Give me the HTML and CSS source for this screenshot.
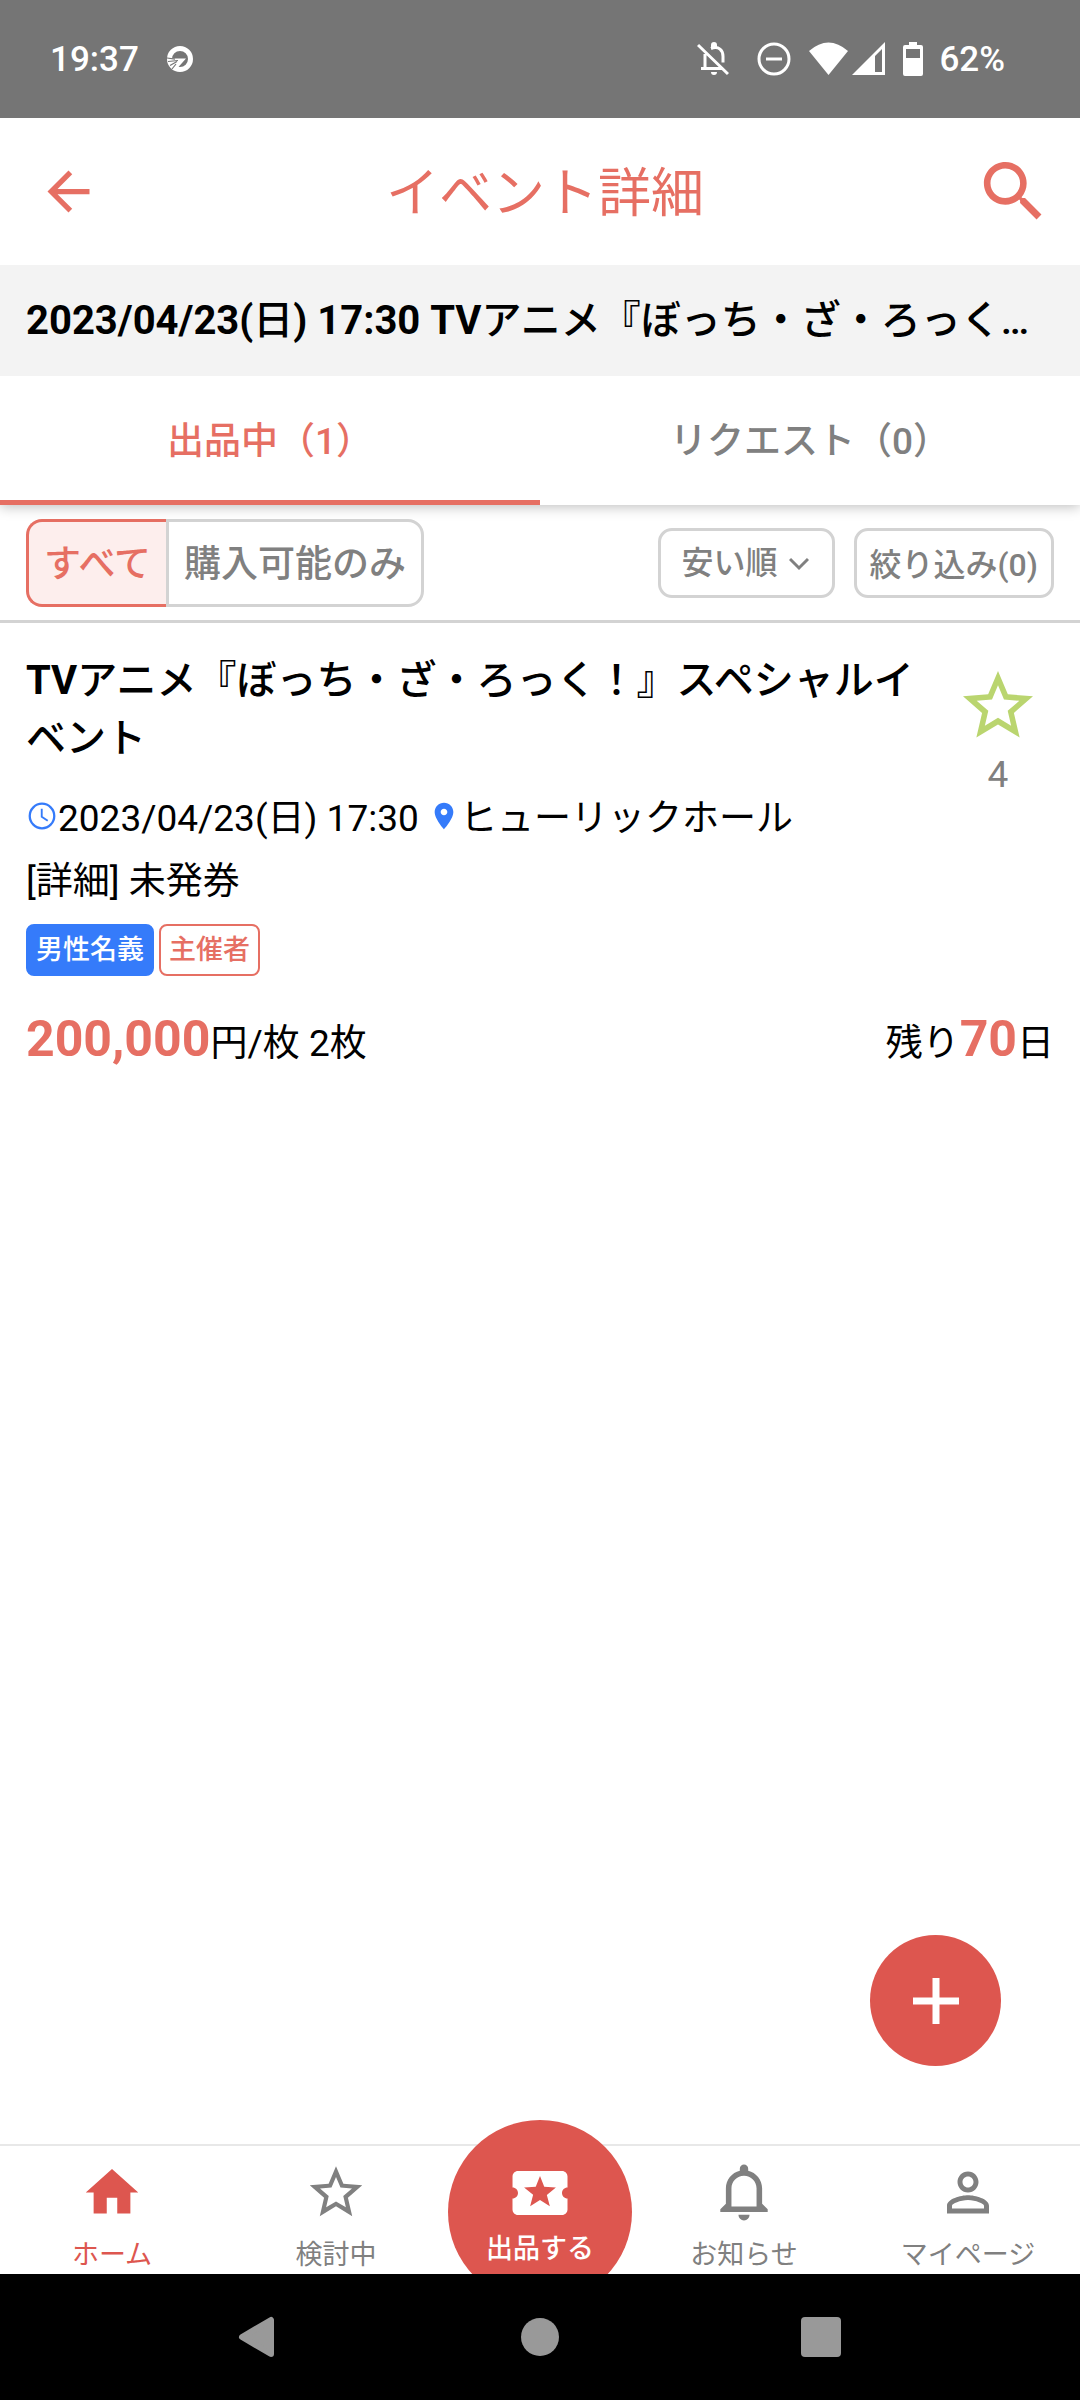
FILE: index.html
```html
<!DOCTYPE html>
<html lang="ja">
<head>
<meta charset="utf-8">
<meta name="viewport" content="width=device-width, initial-scale=1">
<title>イベント詳細</title>
<link rel="stylesheet" href="styles.css">
</head>
<body>
<div class="statusbar">
  <div class="status-left">
    <span>19:37</span>
    <svg width="26" height="26" viewBox="0 0 26 26" aria-hidden="true"><circle cx="13" cy="13" r="10.500" fill="none" stroke="#fff" stroke-width="5"/><path fill="#fff" d="M0 12.500H19L11 21.500 9 24 3 20 1 14z"/><path d="M0 12L8 13.200M1 15.500L11 14.500M3 19.500L10 15.500M5 23L9 18" stroke="#757575" stroke-width="1.200"/></svg>
  </div>
  <div class="status-right">
    <svg class="bell-off" width="32" height="34" viewBox="0 0 32 34" fill="none" stroke="#fff" stroke-width="3" aria-hidden="true"><path d="M1 3l30 29M8 12v14M4 26.500h22M14 6.500c8-3 12 2 12 8v6"/><path d="M14 3a3 3 0 0 1 6 0v3h-6zM14 30h6a3 3 0 0 1-6 0z" fill="#fff" stroke="none"/></svg>
    <svg class="dnd" width="34" height="34" viewBox="0 0 34 34" fill="none" stroke="#fff" stroke-width="3" aria-hidden="true"><circle cx="17" cy="17" r="15"/><path d="M9 17h16"/></svg>
    <svg width="39" height="34" viewBox="0 0 39 34" fill="#fff" aria-hidden="true"><path d="M0 9Q19.500-8 39 9L19.500 33z"/></svg>
    <svg class="signal" width="33" height="34" viewBox="0 0 33 34" fill="#fff" aria-hidden="true"><path fill-rule="evenodd" d="M0 33L33 0V33ZM23 14V30H30V7Z"/></svg>
    <svg class="battery" width="20" height="34" viewBox="0 0 20 34" aria-hidden="true"><path fill="#fff" fill-rule="evenodd" d="M6 0h8v3h4q2 0 2 2v27q0 2-2 2H2q-2 0-2-2V5q0-2 2-2h4zM3 7v9h14V7z"/></svg>
    <span>62%</span>
  </div>
</div>

<header class="appbar">
  <button class="icon-button" type="button" aria-label="戻る">
    <svg width="63" height="63" viewBox="0 0 24 24" fill="currentColor"><path d="M20 11H7.830l5.590-5.590L12 4l-8 8 8 8 1.410-1.410L7.830 13H20v-2z"/></svg>
  </button>
  <h1>イベント詳細</h1>
  <button class="icon-button" type="button" aria-label="検索">
    <svg width="79" height="79" viewBox="0 0 24 24" fill="currentColor"><path d="M15.500 14h-.790l-.280-.270C15.410 12.590 16 11.110 16 9.500 16 5.910 13.090 3 9.500 3S3 5.910 3 9.500 5.910 16 9.500 16c1.610 0 3.090-.590 4.230-1.570l.270.280v.790l5 4.990L20.490 19l-4.990-5zm-6 0C7.010 14 5 11.990 5 9.500S7.010 5 9.500 5 14 7.010 14 9.500 11.990 14 9.500 14z"/></svg>
  </button>
</header>

<h2 class="event-name"><b>2023/04/23(</b>日<b>) 17:30 TV</b>アニメ『ぼっち・ざ・ろっく！』スペシャルイベント</h2>

<nav class="tabs">
  <a class="tab active" href="#selling">出品中（1）</a>
  <a class="tab" href="#requests">リクエスト（0）</a>
</nav>

<div class="filters">
  <div class="segmented">
    <button class="segment selected" type="button">すべて</button>
    <button class="segment" type="button">購入可能のみ</button>
  </div>
  <div class="sorting">
    <div class="sort">
      <select class="control" aria-label="並び順">
        <option>安い順</option>
        <option>高い順</option>
      </select>
      <svg class="chevron" width="20" height="14" viewBox="0 0 20 14" fill="none" stroke="currentColor" stroke-width="3" aria-hidden="true"><path d="M1 2l9 9 9-9"/></svg>
    </div>
    <button class="control" type="button">絞り込み(0)</button>
  </div>
</div>

<main class="listing">
  <article class="ticket">
    <div class="ticket-top">
      <div class="ticket-info">
        <h3><b>TV</b>アニメ『ぼっち・ざ・ろっく！』スペシャルイベント</h3>
        <p class="detail"><svg class="inline-icon" width="32" height="32" viewBox="0 0 24 24" fill="none" stroke="currentColor" stroke-width="1.700" aria-hidden="true"><circle cx="12" cy="12" r="9.200"/><path d="M11.800 6.500v6l4.500 3" stroke-width="1.400"/></svg>2023/04/23(日) 17:30 <svg class="inline-icon" width="32" height="32" viewBox="0 0 24 24" fill="currentColor" aria-hidden="true"><path d="M12 2C8.130 2 5 5.130 5 9c0 5.250 7 13 7 13s7-7.750 7-13c0-3.870-3.130-7-7-7zm0 9.500c-1.380 0-2.500-1.120-2.500-2.500s1.120-2.500 2.500-2.500 2.500 1.120 2.500 2.500-1.120 2.500-2.500 2.500z"/></svg>ヒューリックホール</p>
        <p class="detail">[詳細] 未発券</p>
      </div>
      <button class="favorite" type="button" aria-label="お気に入り">
        <svg width="84" height="84" viewBox="0 0 24 24" fill="#bad56f"><path d="M12 15.390L8.240 17.660 9.230 13.380 5.910 10.500 10.290 10.130 12 6.090 13.710 10.130 18.090 10.500 14.770 13.380 15.760 17.660M22 9.240L14.810 8.630 12 2 9.190 8.630 2 9.240 7.450 13.970 5.820 21 12 17.270 18.180 21 16.540 13.970 22 9.240Z"/></svg>
        <span>4</span>
      </button>
    </div>
    <div class="tags">
      <span class="tag filled">男性名義</span>
      <span class="tag">主催者</span>
    </div>
    <div class="price-row">
      <span><strong>200,000</strong>円/枚 2枚</span>
      <span>残り<strong>70</strong>日</span>
    </div>
  </article>
  <button class="fab" type="button" aria-label="追加">
    <svg width="46" height="46" viewBox="0 0 46 46" stroke="#fff" stroke-width="7"><path d="M0 23h46M23 0v46"/></svg>
  </button>
</main>

<nav class="bottom-nav">
  <a class="nav-item current" href="#home">
    <svg width="66" height="66" viewBox="0 0 24 24" fill="currentColor"><path d="M10 20V14H14V20H19V12H22L12 3 2 12H5V20H10Z"/></svg>
    <span>ホーム</span>
  </a>
  <a class="nav-item" href="#watching">
    <svg width="66" height="66" viewBox="0 0 24 24" fill="currentColor"><path d="M12 15.390L8.240 17.660 9.230 13.380 5.910 10.500 10.290 10.130 12 6.090 13.710 10.130 18.090 10.500 14.770 13.380 15.760 17.660M22 9.240L14.810 8.630 12 2 9.190 8.630 2 9.240 7.450 13.970 5.820 21 12 17.270 18.180 21 16.540 13.970 22 9.240Z"/></svg>
    <span>検討中</span>
  </a>
  <a class="nav-sell" href="#sell">
    <svg width="66" height="66" viewBox="0 0 24 24" fill="currentColor"><path d="M20 12c0-1.100.900-2 2-2V6c0-1.100-.900-2-2-2H4c-1.100 0-1.990.900-1.990 2v4c1.100 0 1.990.900 1.990 2s-.890 2-2 2v4c0 1.100.900 2 2 2h16c1.100 0 2-.900 2-2v-4c-1.100 0-2-.900-2-2zm-4.420 4.800L12 14.500l-3.580 2.300 1.080-4.120-3.290-2.690 4.240-.250L12 5.800l1.540 3.950 4.240.250-3.290 2.690 1.090 4.110z"/></svg>
    <span>出品する</span>
  </a>
  <a class="nav-item" href="#news">
    <svg width="66" height="66" viewBox="0.200 0.700 22.600 22.600" fill="currentColor"><path d="M16 17H7V10.500C7 8 9 6 11.500 6 14 6 16 8 16 10.500M18 16V10.500C18 7.430 15.860 4.860 13 4.180V3.500A1.500 1.500 0 0 0 11.500 2 1.500 1.500 0 0 0 10 3.500V4.180C7.130 4.860 5 7.430 5 10.500V16L3 18V19H20V18M11.500 22A2 2 0 0 0 13.500 20H9.500A2 2 0 0 0 11.500 22Z"/></svg>
    <span>お知らせ</span>
  </a>
  <a class="nav-item" href="#mypage">
    <svg width="66" height="66" viewBox="0 0 24 24" fill="currentColor"><path d="M12 5.900c1.160 0 2.100.940 2.100 2.100s-.940 2.100-2.100 2.100S9.900 9.160 9.900 8s.940-2.100 2.100-2.100m0 9c2.970 0 6.100 1.460 6.100 2.100v1.100H5.900V17c0-.640 3.130-2.100 6.100-2.100M12 4C9.790 4 8 5.790 8 8s1.790 4 4 4 4-1.790 4-4-1.790-4-4-4zm0 9c-2.670 0-8 1.340-8 4v3h16v-3c0-2.660-5.330-4-8-4z"/></svg>
    <span>マイページ</span>
  </a>
</nav>

<div class="system-nav">
  <button type="button" aria-label="戻る"><svg width="44" height="44" viewBox="0 0 44 44" fill="#999" stroke="#999" stroke-width="6" stroke-linejoin="round"><path d="M5 22L34 5V39Z"/></svg></button>
  <button type="button" aria-label="ホーム"><svg width="40" height="40" viewBox="0 0 40 40" fill="#999"><circle cx="20" cy="20" r="19"/></svg></button>
  <button type="button" aria-label="最近のアプリ"><svg width="40" height="40" viewBox="0 0 40 40" fill="#999"><rect width="40" height="40" rx="4"/></svg></button>
</div>
</body>
</html>
```
FILE: styles.css
```css
:root {
  --coral: #e66f63;
  --red: #dd564f;
  --gray: #808080;
  --line: #d3d3d3;
  --blue: #357bfa;
  --side: 26px;
}

* {
  box-sizing: border-box;
}

body {
  margin: 0;
  min-height: 100vh;
  display: flex;
  flex-direction: column;
  background: #fff;
  color: #000;
  font-family: Roboto, "Noto Sans CJK JP", sans-serif;
  font-size: 37px;
}

h1, h2, h3, p {
  margin: 0;
  font-weight: 400;
}

a {
  color: inherit;
  text-decoration: none;
}

button, select {
  margin: 0;
  padding: 0;
  border: 0;
  background: none;
  color: inherit;
  font: inherit;
}

svg {
  display: block;
}

/* Status bar */
.statusbar {
  display: flex;
  justify-content: space-between;
  align-items: center;
  height: 118px;
  padding: 0 75px 0 50px;
  background: #757575;
  color: #fff;
  font-size: 35px;
  font-weight: 500;
}

.status-left, .status-right {
  display: flex;
  align-items: center;
}

.status-left {
  gap: 28px;
}

.bell-off {
  margin-right: 28px;
}

.dnd {
  margin-right: 18px;
}

.signal {
  margin: 0 18px 0 4px;
}

.battery {
  margin-right: 16px;
}

/* App bar */
.appbar {
  display: flex;
  justify-content: space-between;
  align-items: center;
  height: 147px;
  padding: 0 27px 0 37px;
  color: var(--coral);
}

.appbar h1 {
  padding: 0 0 5px 16px;
  font-size: 53px;
}

.event-name {
  padding: 0 var(--side);
  overflow: hidden;
  background: #f3f3f3;
  font-size: 40px;
  font-weight: 500;
  line-height: 111px;
  text-overflow: ellipsis;
  white-space: nowrap;
}

/* Tabs */
.tabs {
  position: relative;
  display: flex;
  box-shadow: 0 2px 12px rgba(0, 0, 0, .25);
  clip-path: inset(0 0 -20px 0);
}

.tab {
  flex: 1;
  border-bottom: 5px solid transparent;
  padding-top: 8px;
  color: var(--gray);
  font-weight: 500;
  line-height: 116px;
  text-align: center;
}

.tab.active {
  border-color: var(--coral);
  color: var(--coral);
}

/* Filters */
.filters {
  display: flex;
  justify-content: space-between;
  align-items: center;
  padding: 14px var(--side) 13px;
  border-bottom: 3px solid var(--line);
  color: var(--gray);
  font-weight: 500;
}

.segmented {
  display: flex;
}

.segment {
  height: 88px;
  padding: 0 15px 4px;
  border: 3px solid var(--line);
  border-radius: 0 16px 16px 0;
}

.segment.selected {
  border-color: var(--coral);
  border-right: 0;
  border-radius: 16px 0 0 16px;
  background: #fdeeed;
  color: var(--coral);
}

.sorting {
  display: flex;
  gap: 19px;
}

.sort {
  position: relative;
}

.control {
  height: 70px;
  padding: 0 13px 2px;
  border: 3px solid var(--line);
  border-radius: 14px;
  font-size: 32px;
}

select.control {
  width: 177px;
  padding: 0 21px;
  appearance: none;
}

.chevron {
  position: absolute;
  top: 29px;
  right: 26px;
  pointer-events: none;
}

/* Listing */
.listing {
  position: relative;
  flex: 1;
}

.ticket {
  padding: 29px var(--side);
}

.ticket-top {
  display: flex;
  align-items: flex-start;
}

.ticket-info {
  flex: 1;
}

.ticket h3 {
  margin-bottom: 21px;
  font-size: 40px;
  font-weight: 500;
  line-height: 58px;
}

.favorite {
  display: flex;
  flex-direction: column;
  align-items: center;
  gap: 3px;
  width: 112px;
  padding-top: 12px;
  color: var(--gray);
  line-height: 48px;
}

.detail {
  margin-top: 3px;
  line-height: 60px;
}

.inline-icon {
  display: inline-block;
  vertical-align: -1px;
  color: var(--blue);
}

.tags {
  display: flex;
  gap: 5px;
  margin-top: 12px;
}

.tag {
  padding: 0 8px;
  border: 2px solid var(--coral);
  border-radius: 8px;
  color: var(--coral);
  font-size: 27px;
  font-weight: 500;
  line-height: 48px;
}

.tag.filled {
  border-color: var(--blue);
  background: var(--blue);
  color: #fff;
}

.price-row {
  display: flex;
  justify-content: space-between;
  margin-top: 28px;
  line-height: 70px;
}

.price-row strong {
  color: var(--coral);
  font-size: 50px;
}

.fab {
  position: absolute;
  right: 79px;
  bottom: 78px;
  display: grid;
  place-items: center;
  width: 131px;
  height: 131px;
  border-radius: 50%;
  background: var(--red);
}

/* Bottom navigation */
.bottom-nav {
  position: relative;
  display: flex;
  height: 130px;
  border-top: 2px solid #e8e8e8;
  color: var(--gray);
  font-size: 27px;
  line-height: 38px;
}

.nav-item, .nav-sell {
  display: flex;
  flex-direction: column;
  align-items: center;
}

.nav-item {
  flex: 1;
  gap: 12px;
  padding-top: 15px;
}

.nav-item.current {
  color: var(--red);
}

.nav-sell {
  gap: 4px;
  width: 184px;
  height: 184px;
  margin-top: -26px;
  padding-top: 40px;
  border-radius: 50%;
  background: var(--red);
  color: #fff;
  font-weight: 500;
}

/* System navigation */
.system-nav {
  position: relative;
  display: flex;
  justify-content: center;
  height: 126px;
  background: #000;
}

.system-nav button {
  display: grid;
  place-items: center;
  width: 281px;
}
```
